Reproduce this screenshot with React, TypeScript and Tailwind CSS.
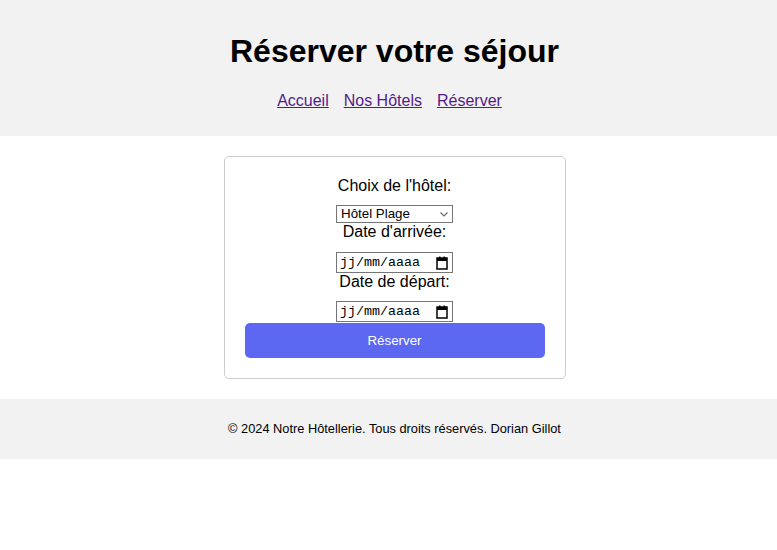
import { useState } from "react";

function CalendarIcon() {
  return (
    <svg width="12" height="14" viewBox="0 0 12 14" className="shrink-0">
      <rect x="1" y="2" width="10" height="11" fill="none" stroke="#000" strokeWidth="1.5" />
      <rect x="1" y="2" width="10" height="3" fill="#000" />
      <rect x="3" y="0.5" width="1.5" height="2" fill="#000" />
      <rect x="7.5" y="0.5" width="1.5" height="2" fill="#000" />
    </svg>
  );
}

function DateField() {
  return (
    <div className="mx-auto flex h-[21px] w-[117px] items-center justify-between border border-[#767676] bg-white pl-[3px] pr-[4px]">
      <span className="font-['Liberation_Mono',monospace] text-[13.33px] leading-none text-black">jj/mm/aaaa</span>
      <CalendarIcon />
    </div>
  );
}

export default function App() {
  const [hotel, setHotel] = useState("plage");
  return (
    <div className="min-h-[550px] w-full overflow-hidden bg-white">
      <div className="w-[789px] font-['Liberation_Sans',Arial,sans-serif] text-black">
        <header className="h-[136px] bg-[#f2f2f2] pt-[33px] text-center">
          <h1 className="text-[32px] font-bold leading-[37px]">Réserver votre séjour</h1>
          <nav className="mt-[22px] flex justify-center gap-[15px] pr-[10px] text-[16px] leading-[18px]">
            <a href="#" className="text-[#551a8b] underline">Accueil</a>
            <a href="#" className="text-[#551a8b] underline">Nos Hôtels</a>
            <a href="#" className="text-[#551a8b] underline">Réserver</a>
          </nav>
        </header>

        <main className="py-5">
          <form className="mx-auto w-[342px] rounded-[5px] border border-[#cccccc] p-5 text-center">
            <label className="block text-[16px] leading-[18px]">Choix de l'hôtel:</label>
            <div className="relative mx-auto mt-[10px] h-[18px] w-[117px]">
              <select
                value={hotel}
                onChange={(e) => setHotel(e.target.value)}
                className="block h-[18px] w-full appearance-none border border-[#767676] bg-white pl-[4px] text-left text-[13.33px] leading-[16px]"
              >
                <option value="plage">Hôtel Plage</option>
                <option value="montagne">Hôtel Montagne</option>
                <option value="ville">Hôtel Ville</option>
              </select>
              <svg
                width="8"
                height="5"
                viewBox="0 0 8 5"
                className="pointer-events-none absolute right-[5px] top-[7px]"
              >
                <path d="M0.5 0.5 L4 4 L7.5 0.5" fill="none" stroke="#6b6b6b" strokeWidth="1.2" />
              </svg>
            </div>
            <label className="block text-[16px] leading-[18px]">Date d'arrivée:</label>
            <div className="mt-[11px]">
              <DateField />
            </div>
            <label className="block text-[16px] leading-[18px]">Date de départ:</label>
            <div className="mt-[10px]">
              <DateField />
            </div>
            <button
              type="button"
              className="mt-[1px] h-[35px] w-full rounded-[5px] bg-[#5c68f2] text-[13.33px] text-white"
            >
              Réserver
            </button>
          </form>
        </main>

        <footer className="flex h-[60px] items-center justify-center bg-[#f2f2f2] text-[12.8px]">
          © 2024 Notre Hôtellerie. Tous droits réservés. Dorian Gillot
        </footer>
      </div>
    </div>
  );
}
